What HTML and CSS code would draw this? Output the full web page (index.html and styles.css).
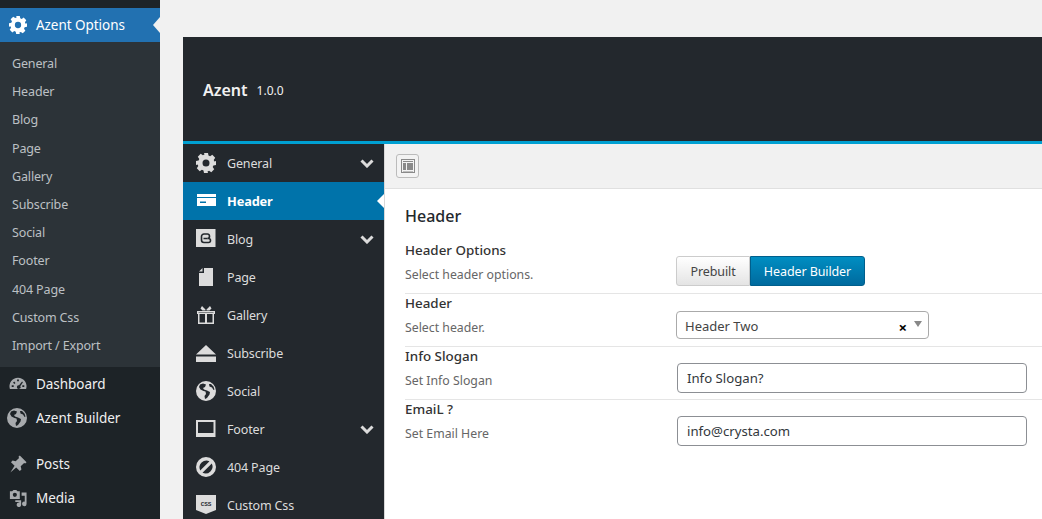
FILE: index.html
```html
<!DOCTYPE html>
<html lang="en">
<head>
<meta charset="utf-8">
<title>Azent Options</title>
<link rel="stylesheet" href="styles.css">
</head>
<body>
<svg class="defs" width="0" height="0" aria-hidden="true">
  <defs>
    <symbol id="gear" viewBox="0 0 20 20"><path fill-rule="evenodd" d="M8 0h4l.5 2.600 1.600.7L16.300 1.800l2.900 2.900-1.500 2.200.7 1.600L20 8v4l-2.600.5-.7 1.600 1.500 2.200-2.900 2.900-2.200-1.500-1.600.7L12 20H8l-.5-2.600-1.600-.7-2.200 1.500-2.900-2.900 1.500-2.200-.7-1.600L0 12V8l2.600-.5.7-1.600-1.500-2.200 2.900-2.900 2.200 1.500 1.600-.7zM10 6.500a3.500 3.500 0 1 0 0 7 3.500 3.500 0 0 0 0-7z"/></symbol>
    <symbol id="globe" viewBox="0 0 20 20"><path fill-rule="evenodd" d="M10 0a10 10 0 1 1 0 20 10 10 0 0 1 0-20zM4 3.500l-1 2.500 1.500 2.500 3 1.500 2 .5.500 2.500-1.500 2 .5 3 2-1 2.500-3.500.5-2.500-3-1.500-3-1-1-1.500 2-1 1-2.500-3-1zM13 3l.5 2.500 2.500 1 1.500 2.500 1-.5-1-3-2.500-2.500z"/></symbol>
  </defs>
</svg>
<div class="shell">
  <nav class="adminbar">
    <a class="top-current"><svg class="wp-ico white"><use href="#gear"/></svg><span>Azent Options</span></a>
    <ul class="submenu">
      <li>General</li><li>Header</li><li>Blog</li><li>Page</li><li>Gallery</li><li>Subscribe</li><li>Social</li><li>Footer</li><li>404 Page</li><li>Custom Css</li><li>Import / Export</li>
    </ul>
    <a class="top-item first">
      <svg class="wp-ico" viewBox="0 0 20 20"><path fill-rule="evenodd" d="M10 3a9.500 9.500 0 0 1 9 12.500H1A9.500 9.500 0 0 1 10 3zM9 5v2h2V5zM4.500 8.500l1.500 1.500 1.200-1.200-1.500-1.500zM14.500 7.300l-3.300 4.200a2 2 0 1 0 1.300.9l3-4.300zM3 11.500v1.800h2.200v-1.800zM14.800 11.500v1.800H17v-1.800z"/></svg>
      <span>Dashboard</span></a>
    <a class="top-item builder"><svg class="wp-ico big"><use href="#globe"/></svg><span>Azent Builder</span></a>
    <a class="top-item posts">
      <svg class="wp-ico" viewBox="0 0 20 20"><path d="M12 .5l7.500 7.500-1.500 1.500-1.200-.7-3.800 3.800.8 3.400-1.800 1.800-4-4-6.500 5.700 4.700-7.500-4-4 1.800-1.800 3.400.8 3.800-3.800-.7-1.200z"/></svg>
      <span>Posts</span></a>
    <a class="top-item">
      <svg class="wp-ico" viewBox="0 0 20 20"><path fill-rule="evenodd" d="M1 2.500h2.500L5 1h3l1.500 1.500H12V11H1zM6.500 4.200a2.300 2.300 0 1 0 0 4.600 2.300 2.300 0 0 0 0-4.600z"/><path d="M14 4h5.500v12.500a2.500 2.500 0 1 1-2-2.400V7.500H14zM7 12.500h6.500v5a2.500 2.500 0 1 1-2-2.400v-.6H7z"/></svg>
      <span>Media</span></a>
  </nav>

  <main class="content">
    <section class="panel">
      <header class="panel-head">
        <h1>Azent</h1><span class="version">1.0.0</span>
      </header>
      <div class="panel-body">
        <ul class="side">
          <li><svg class="side-ico"><use href="#gear"/></svg><span>General</span><svg class="chev" viewBox="0 0 14 9"><path d="M1.500 1.500L7 7l5.500-5.500"/></svg></li>
          <li class="active"><svg class="side-ico" viewBox="0 0 20 20"><path fill-rule="evenodd" d="M1 3h19v3H1zM1 7h19v8H1zM4 10.500V12h6v-1.500z"/></svg><span>Header</span></li>
          <li><svg class="side-ico" viewBox="0 0 20 20"><rect y="0" width="19.500" height="18"/><path class="cut" d="M8 5h3a2.200 2.200 0 0 1 .5 4.500H12.500a2 2 0 0 1 0 4H8a2.500 2.500 0 0 1-2.500-2.500V7.500A2.500 2.500 0 0 1 8 5z"/><path class="cut-line" d="M7.500 9.500h4"/></svg><span>Blog</span><svg class="chev" viewBox="0 0 14 9"><path d="M1.500 1.500L7 7l5.500-5.500"/></svg></li>
          <li><svg class="side-ico" viewBox="0 0 20 20"><path d="M8 1h9v18H3V6h5zM3 4.500L6.500 1v3.500z"/></svg><span>Page</span></li>
          <li><svg class="side-ico" viewBox="0 0 20 20"><path fill-rule="evenodd" d="M1 6h18v3h-1v10H2V9H1zM3.500 9v8.500h5.500V9zM11 9v8.500h5.500V9zM2.500 7.200v.6h15v-.6z"/><path d="M6 1l3.500 3.500v1H6.500l-2-2zM14 1l-3.500 3.500v1h3l2-2z"/></svg><span>Gallery</span></li>
          <li><svg class="side-ico" viewBox="0 0 20 20"><path d="M10 2l10 9.500H0zM0 13.500h20V19H0z"/></svg><span>Subscribe</span></li>
          <li><svg class="side-ico"><use href="#globe"/></svg><span>Social</span></li>
          <li><svg class="side-ico" viewBox="0 0 20 20"><path fill-rule="evenodd" d="M0 1h19.500v17H0zM2 3v11h15.500V3z"/></svg><span>Footer</span><svg class="chev" viewBox="0 0 14 9"><path d="M1.500 1.500L7 7l5.500-5.500"/></svg></li>
          <li><svg class="side-ico" viewBox="0 0 20 20"><path fill-rule="evenodd" d="M10 0a10 10 0 1 1 0 20 10 10 0 0 1 0-20zM4.200 13.500l9.300-9.300a7 7 0 0 0-9.300 9.300zM6.500 15.800a7 7 0 0 0 9.300-9.300z"/></svg><span>404 Page</span></li>
          <li class="css"><svg class="side-ico" viewBox="0 0 20 20"><path d="M0 0h20v15l-10 4-10-4z"/><text class="css-text" x="10" y="11" text-anchor="middle">CSS</text></svg><span>Custom Css</span></li>
        </ul>
        <div class="main">
          <div class="toolbar">
            <button class="expand" type="button" aria-label="Toggle layout">
              <svg viewBox="0 0 14 14"><path fill-rule="evenodd" d="M0 0h14v14H0zM1 1v12h12V1z"/><path d="M2 2h10v1H2zM2 4h3v7H2zM6 4h6v7H6zM2 12h10v.5H2z"/></svg>
            </button>
          </div>
          <div class="form">
            <h2>Header</h2>
            <div class="row">
              <div class="label"><h3>Header Options</h3><p>Select header options.</p></div>
              <div class="control">
                <div class="btn-group"><button class="seg" type="button">Prebuilt</button><button class="seg on" type="button">Header Builder</button></div>
              </div>
            </div>
            <div class="row">
              <div class="label"><h3>Header</h3><p>Select header.</p></div>
              <div class="control">
                <div class="select"><span>Header Two</span><b class="clear">×</b><i class="caret"></i></div>
              </div>
            </div>
            <div class="row">
              <div class="label"><h3>Info Slogan</h3><p>Set Info Slogan</p></div>
              <div class="control"><input class="field" type="text" value="Info Slogan?"></div>
            </div>
            <div class="row last">
              <div class="label"><h3>EmaiL ?</h3><p>Set Email Here</p></div>
              <div class="control"><input class="field" type="text" value="info@crysta.com"></div>
            </div>
          </div>
        </div>
      </div>
    </section>
  </main>
</div>
</body>
</html>
```
FILE: styles.css
```css
* { box-sizing: border-box; }
html, body { margin: 0; height: 519px; overflow: hidden; }
body { background: #f1f1f1; font: 13px/1.4 "Noto Sans", "Open Sans", sans-serif; color: #23282d; }
.defs { position: absolute; }
ul { list-style: none; margin: 0; padding: 0; }
h1, h2, h3, p { margin: 0; }
.shell { display: flex; height: 519px; }

.adminbar { width: 160px; flex: none; background: #1d2327; padding-top: 8px; color: #f0f0f1; font-size: 13.500px; letter-spacing: -.05px; }
.adminbar a { display: flex; align-items: center; height: 34px; }
.adminbar a span { margin-left: 9px; }
.top-current { position: relative; background: #2271b1; color: #fff; }
.top-current::after { content: ""; position: absolute; right: 0; top: 9px; border-style: solid; border-color: transparent #f1f1f1 transparent transparent; border-width: 8px 7px 8px 0; }
.wp-ico { width: 18px; height: 18px; margin-left: 9px; fill: #a7aaad; flex: none; }
.wp-ico.white { fill: #fff; }
.wp-ico.big { width: 20px; height: 20px; margin-left: 7px; margin-right: 0; }
.submenu { background: #2c3338; height: 325px; padding-top: 8px; color: #bcc0c4; font-size: 12.500px; letter-spacing: -.15px; }
.submenu li { height: 28.2px; line-height: 28.2px; padding-left: 12px; white-space: nowrap; }
.top-item.posts { margin-top: 12px; }

.content { flex: 1; min-width: 0; padding: 37px 0 0 23px; }
.panel { height: 482px; width: 900px; display: flex; flex-direction: column; }
.panel-head { flex: none; height: 104px; background: #23282d; display: flex; align-items: center; padding: 2px 0 0 20px; color: #f1f1f1; }
.panel-head h1 { font-size: 16px; font-weight: 600; }
.version { font-size: 12px; margin-left: 9px; margin-top: 2px; }
.panel-body { flex: 1; display: flex; border-top: 3px solid #00a0d2; min-height: 0; background: #fff; }

.side { width: 201px; flex: none; background: #23282d; color: #dcdcdc; font-size: 12.500px; letter-spacing: -.15px; }
.side li { height: 38px; display: flex; align-items: center; padding-left: 13px; position: relative; }
.side li span { margin-left: 11px; flex: 1; padding-top: 2px; }
.side-ico { width: 20px; height: 20px; fill: #dcdcdc; flex: none; }
.side-ico .cut { fill: none; stroke: #23282d; stroke-width: 1.600; }
.side-ico .cut-line { fill: none; stroke: #23282d; stroke-width: 1.500; }
.css-text { font: 700 6px "Liberation Mono", monospace; fill: #23282d; }
.chev { width: 14px; height: 9px; fill: none; stroke: #dcdcdc; stroke-width: 3; margin-right: 10px; flex: none; }
.side li.active { background: #0073aa; color: #fff; font-weight: 700; font-size: 12.800px; }
.side li.active .side-ico { fill: #fff; }
.side li.active::after { content: ""; position: absolute; right: 0; top: 12px; border-style: solid; border-color: transparent #fff transparent transparent; border-width: 7px 7px 7px 0; }

.main { flex: 1; min-width: 0; background: #fff; border-left: 1px solid #d8d8d8; }
.toolbar { height: 45px; background: #f1f1f1; border-bottom: 1px solid #e0e0e0; padding: 10px 0 0 11px; }
.expand { display: block; width: 23px; height: 24px; padding: 0; background: #f3f3f3; border: 1px solid #bbb; border-radius: 3px; }
.expand svg { display: block; width: 14px; height: 14px; margin: 4px; fill: #8a8a8a; }
.form { padding: 16px 0 0 20px; }
.form h2 { font-size: 16px; font-weight: 500; line-height: 22px; color: #23282d; margin-bottom: 14px; }
.row { display: flex; height: 53px; border-bottom: 1px solid #e5e5e5; }
.row.last { border-bottom: 0; }
.label { width: 271px; flex: none; }
.label h3 { font-size: 13.400px; font-weight: 500; line-height: 18px; color: #333; }
.label p { font-size: 12.300px; line-height: 18px; margin-top: 7px; color: #666; }
.control { flex: 1; padding-top: 16px; }
.btn-group { display: flex; margin-top: -1px; }
.seg { height: 30px; font: inherit; font-size: 12.500px; letter-spacing: -.1px; padding: 2px 0 0; border-radius: 3px 0 0 3px; width: 74px; color: #444; background: linear-gradient(#fff, #e4e4e4); border: 1px solid #ccc; }
.seg.on { width: 115px; color: #fff; background: linear-gradient(#008ec2, #006a9e); border: 1px solid #005f8c; border-radius: 0 3px 3px 0; }
.select { position: relative; width: 253px; height: 28px; margin-top: 1px; border: 1px solid #aaa; border-radius: 4px; padding-left: 8px; line-height: 28px; color: #444; display: flex; }
.select span { flex: 1; }
.clear { position: absolute; right: 21px; top: 1px; color: #000; font-size: 15px; font-weight: 700; }
.caret { position: absolute; right: 6px; top: 9px; border-style: solid; border-color: #888 transparent transparent; border-width: 6px 4.500px 0; }
.field { display: block; width: 350px; height: 30px; margin: 0 0 0 1px; border: 1px solid #8c8f94; border-radius: 4px; padding: 0 9px; font: inherit; font-size: 13.200px; color: #32373c; background: #fff; }
```
